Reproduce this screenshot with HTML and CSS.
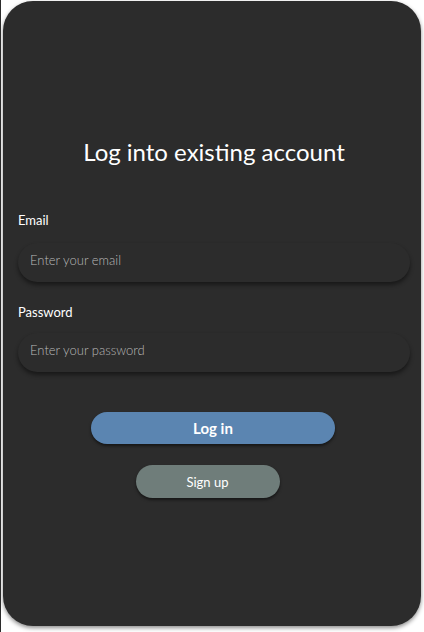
FILE: index.html
```html
<!DOCTYPE html>
<html lang="en">
<head>
<meta charset="utf-8">
<title>Log in</title>
<link rel="stylesheet" href="styles.css">
</head>
<body>
<main class="card">
  <h1 class="title">Log into existing account</h1>
  <form class="form">
    <label class="field field-email">
      <span class="label">Email</span>
      <input class="input" type="email" placeholder="Enter your email">
    </label>
    <label class="field field-password">
      <span class="label">Password</span>
      <input class="input" type="password" placeholder="Enter your password">
    </label>
    <div class="actions">
      <button type="button" class="btn btn-login">Log in</button>
      <button type="button" class="btn btn-signup">Sign up</button>
    </div>
  </form>
</main>
</body>
</html>
```
FILE: styles.css
```css
* { box-sizing: border-box; }
html, body { margin: 0; padding: 0; }
body {
  width: 424px;
  height: 632px;
  background: #ffffff;
  border-left: 1px solid #2c2c2c;
  padding: 1px 3px 0 2px;
  font-family: Lato, "Open Sans", sans-serif;
  overflow: hidden;
}
.card {
  height: 625px;
  background: #2c2c2c;
  border-radius: 30px;
  box-shadow: 0 2px 4px rgba(0,0,0,0.45);
  padding: 135px 11px 0 15px;
  display: flex;
  flex-direction: column;
}
.title {
  margin: 0;
  font-weight: 400;
  font-size: 24px;
  line-height: 32px;
  color: #ffffff;
  text-align: center;
}
.form {
  margin-top: 44px;
  display: flex;
  flex-direction: column;
}
.field {
  display: flex;
  flex-direction: column;
  gap: 15px;
}
.field-password {
  margin-top: 22px;
  gap: 13px;
}
.label {
  font-size: 13px;
  line-height: 16px;
  color: #ffffff;
  font-weight: 400;
}
.input {
  height: 39px;
  border: none;
  outline: none;
  border-radius: 20px;
  background: #2c2c2c;
  box-shadow: 0 3px 4px rgba(0,0,0,0.45);
  padding: 0 12px 6px;
  font-family: Lato, sans-serif;
  font-size: 13px;
  font-weight: 300;
  color: #ffffff;
}
.input::placeholder { color: #b8b8b8; }
.actions {
  margin-top: 40px;
  display: flex;
  flex-direction: column;
  align-items: center;
  gap: 21px;
}
.btn {
  border: none;
  color: #ffffff;
  font-family: Lato, sans-serif;
  box-shadow: 0 2px 3px rgba(0,0,0,0.5);
  cursor: pointer;
}
.btn-login {
  width: 244px;
  height: 32px;
  border-radius: 16px;
  background: #5b85b1;
  font-size: 15px;
  font-weight: 700;
  margin-right: 2px;
}
.btn-signup {
  width: 144px;
  height: 33px;
  border-radius: 17px;
  background: #6f7d7a;
  font-size: 13px;
  font-weight: 400;
  margin-right: 13px;
}
```
